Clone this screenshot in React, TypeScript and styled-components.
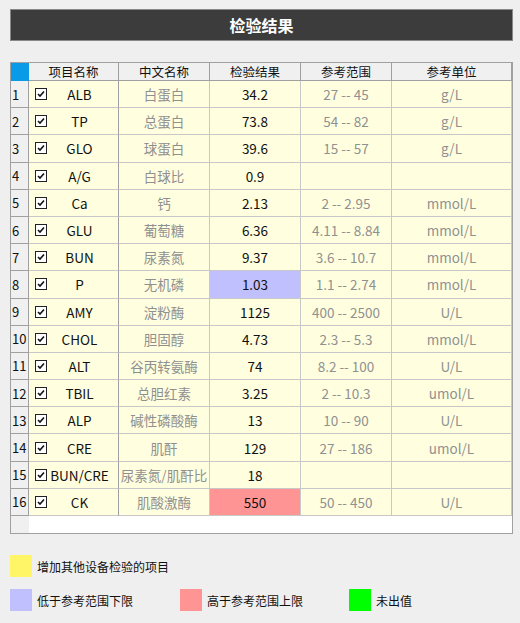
import styled, { createGlobalStyle } from "styled-components";

const GlobalStyle = createGlobalStyle`
  html, body { margin: 0; background: #efefef; }
  body { font-family: "Noto Sans CJK SC", "Liberation Sans", sans-serif; font-size: 13px; color: #111; }
`;

type Row = [string, string, string, string, string, "" | "low" | "high"];

const rows: Row[] = [
  ["ALB", "白蛋白", "34.2", "27 -- 45", "g/L", ""],
  ["TP", "总蛋白", "73.8", "54 -- 82", "g/L", ""],
  ["GLO", "球蛋白", "39.6", "15 -- 57", "g/L", ""],
  ["A/G", "白球比", "0.9", "", "", ""],
  ["Ca", "钙", "2.13", "2 -- 2.95", "mmol/L", ""],
  ["GLU", "葡萄糖", "6.36", "4.11 -- 8.84", "mmol/L", ""],
  ["BUN", "尿素氮", "9.37", "3.6 -- 10.7", "mmol/L", ""],
  ["P", "无机磷", "1.03", "1.1 -- 2.74", "mmol/L", "low"],
  ["AMY", "淀粉酶", "1125", "400 -- 2500", "U/L", ""],
  ["CHOL", "胆固醇", "4.73", "2.3 -- 5.3", "mmol/L", ""],
  ["ALT", "谷丙转氨酶", "74", "8.2 -- 100", "U/L", ""],
  ["TBIL", "总胆红素", "3.25", "2 -- 10.3", "umol/L", ""],
  ["ALP", "碱性磷酸酶", "13", "10 -- 90", "U/L", ""],
  ["CRE", "肌酐", "129", "27 -- 186", "umol/L", ""],
  ["BUN/CRE", "尿素氮/肌酐比", "18", "", "", ""],
  ["CK", "肌酸激酶", "550", "50 -- 450", "U/L", "high"],
];

const Page = styled.div`
  width: 520px;
  height: 623px;
  padding: 9px 7px 0 10px;
  box-sizing: border-box;
`;

const TitleBar = styled.div`
  height: 32px;
  background: #3c3c3c;
  border: 1px solid #888;
  box-sizing: border-box;
  color: #fff;
  font-weight: bold;
  font-size: 16px;
  display: flex;
  align-items: center;
  justify-content: center;
`;

const Table = styled.div`
  margin-top: 21px;
  border: 1px solid #a0a0a0;
  display: grid;
  grid-template-columns: 18px 90px 91px 91px 91px 1fr;
  grid-template-rows: 18px repeat(16, 27.2px) 17px;
  background: #fff;
`;

const Corner = styled.div`
  background: #0a9be8;
`;

const HeadCell = styled.div`
  background: #f0f0f0;
  border-right: 1px solid #a0a0a0;
  border-bottom: 1px solid #a0a0a0;
  display: flex;
  align-items: center;
  justify-content: center;
  font-size: 12.5px;
  &:last-child { border-right: none; }
`;

const IndexCell = styled.div`
  background: #f0f0f0;
  border-bottom: 1px solid #a0a0a0;
  border-right: 1px solid #a0a0a0;
  display: flex;
  align-items: center;
  padding-left: 1px;
  font-size: 13px;
`;

const Cell = styled.div<{ $tone?: string; $muted?: boolean }>`
  background: ${(p) => (p.$tone === "low" ? "#c0c0ff" : p.$tone === "high" ? "#ff9494" : "#ffffe0")};
  color: ${(p) => (p.$muted ? "#909090" : "#111")};
  border-right: 1px solid #c8c8c8;
  border-bottom: 1px solid #c8c8c8;
  display: flex;
  align-items: center;
  justify-content: center;
  white-space: nowrap;
  overflow: hidden;
  font-size: 13.5px;
`;

const NameCell = styled(Cell)`
  justify-content: flex-start;
  padding-left: 6px;
  border-right-color: #a0a0a0;
`;

const NameText = styled.span`
  flex: 1;
  text-align: center;
  padding-right: 6px;
`;

const Check = styled.span`
  width: 10px;
  height: 10px;
  border: 1px solid #222;
  background: #fff;
  display: inline-flex;
  align-items: center;
  justify-content: center;
`;

const Filler = styled.div<{ $grey?: boolean }>`
  background: ${(p) => (p.$grey ? "#f0f0f0" : "#fff")};
`;

const Legend = styled.div`
  margin-top: 21px;
  display: flex;
  flex-direction: column;
  gap: 12px;
`;

const LegendRow = styled.div`
  display: flex;
`;

const LegendItem = styled.div<{ $w?: number }>`
  width: ${(p) => (p.$w ? `${p.$w}px` : "auto")};
  display: flex;
  align-items: center;
  gap: 5px;
  font-size: 12px;
`;

const Swatch = styled.span<{ $c: string }>`
  width: 22px;
  height: 22px;
  background: ${(p) => p.$c};
`;

const CheckMark = () => (
  <Check>
    <svg width="8" height="8" viewBox="0 0 8 8">
      <path d="M1 4 L3 6 L7 1.5" stroke="#111" strokeWidth="1.6" fill="none" />
    </svg>
  </Check>
);

export default function App() {
  return (
    <Page>
      <GlobalStyle />
      <TitleBar>检验结果</TitleBar>
      <Table>
        <Corner />
        <HeadCell>项目名称</HeadCell>
        <HeadCell>中文名称</HeadCell>
        <HeadCell>检验结果</HeadCell>
        <HeadCell>参考范围</HeadCell>
        <HeadCell>参考单位</HeadCell>
        {rows.map((r, i) => [
          <IndexCell key={`i${i}`}>{i + 1}</IndexCell>,
          <NameCell key={`n${i}`}>
            <CheckMark />
            <NameText>{r[0]}</NameText>
          </NameCell>,
          <Cell key={`c${i}`} $muted>{r[1]}</Cell>,
          <Cell key={`v${i}`} $tone={r[5]}>{r[2]}</Cell>,
          <Cell key={`r${i}`} $muted>{r[3]}</Cell>,
          <Cell key={`u${i}`} $muted>{r[4]}</Cell>,
        ])}
        <Filler $grey />
        <Filler />
        <Filler />
        <Filler />
        <Filler />
        <Filler />
      </Table>
      <Legend>
        <LegendRow>
          <LegendItem><Swatch $c="#fff566" />增加其他设备检验的项目</LegendItem>
        </LegendRow>
        <LegendRow>
          <LegendItem $w={170}><Swatch $c="#c0c0ff" />低于参考范围下限</LegendItem>
          <LegendItem $w={169}><Swatch $c="#ff9494" />高于参考范围上限</LegendItem>
          <LegendItem><Swatch $c="#00ff00" />未出值</LegendItem>
        </LegendRow>
      </Legend>
    </Page>
  );
}
